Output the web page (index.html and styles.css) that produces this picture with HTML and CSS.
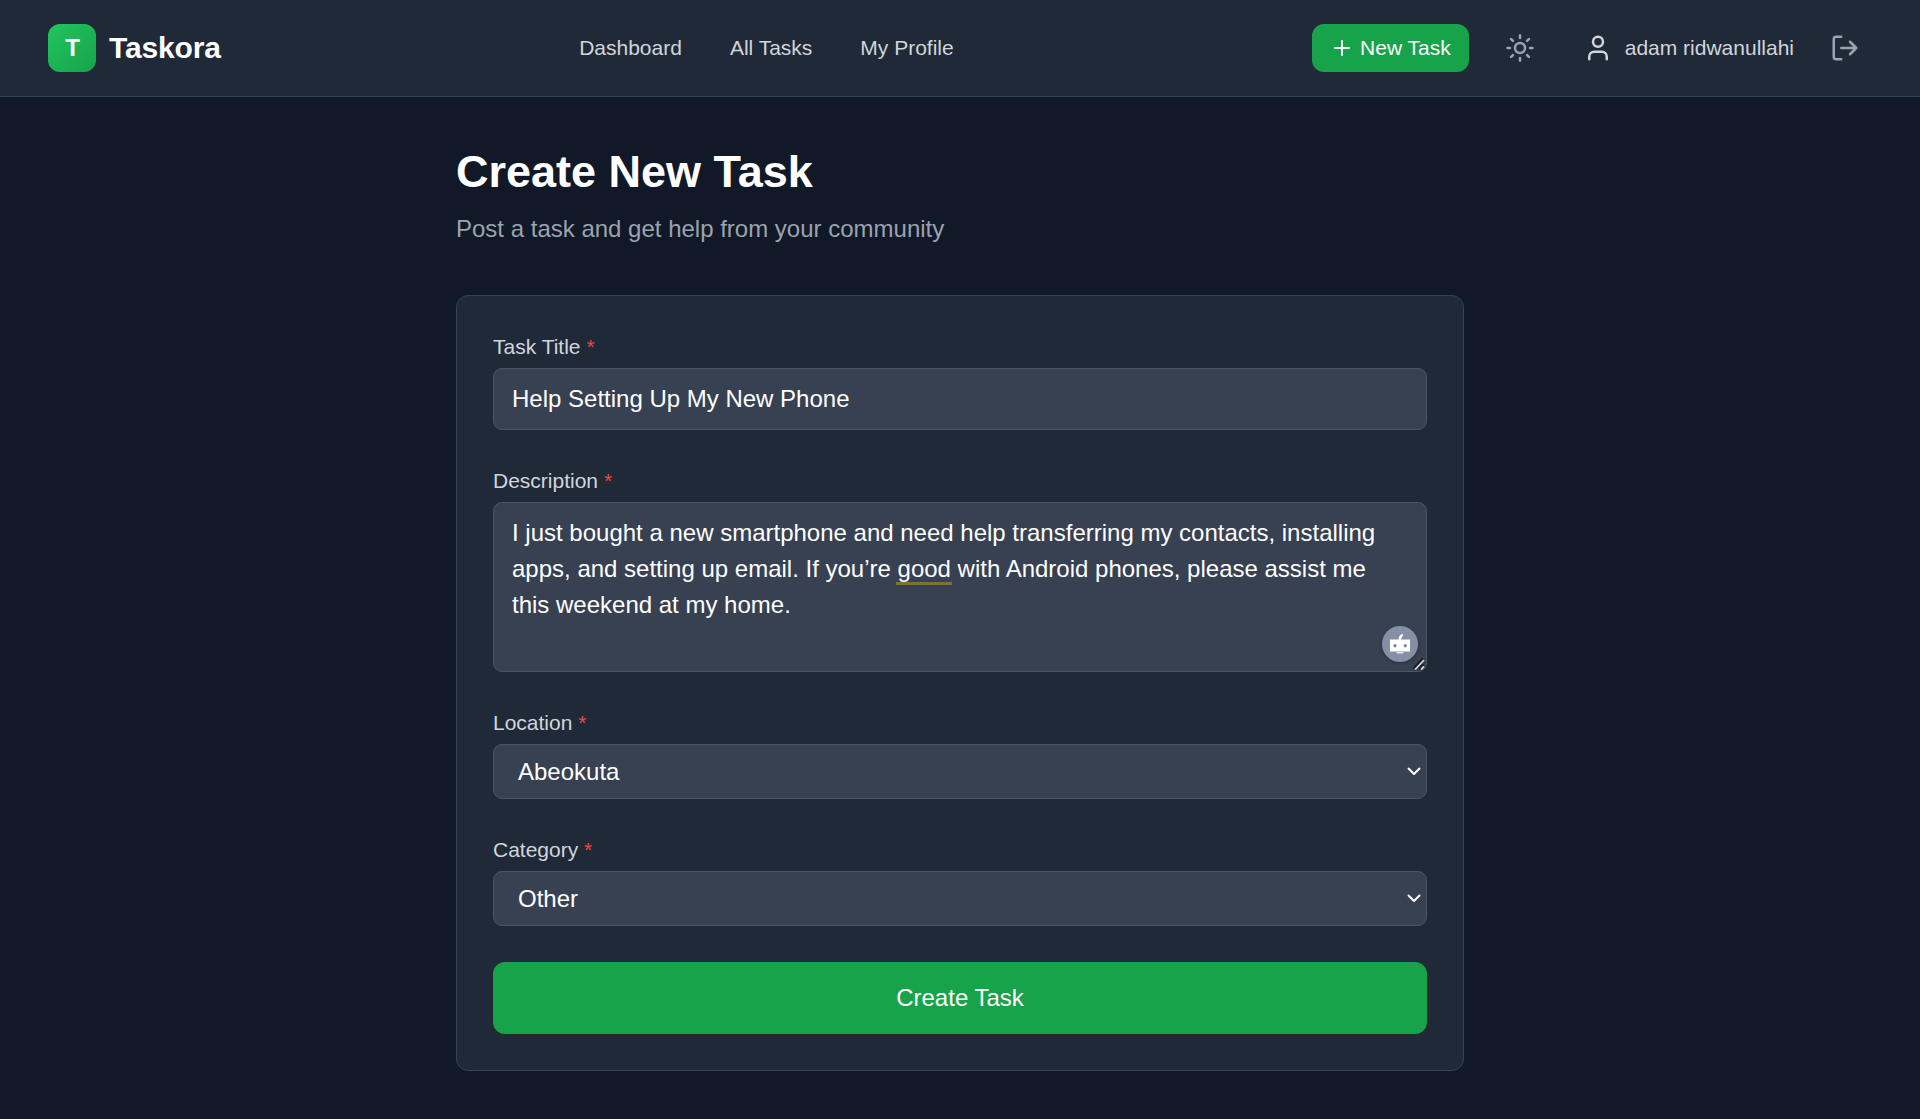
FILE: index.html
```
<!DOCTYPE html>
<html lang="en">
<head>
<meta charset="utf-8">
<title>Taskora</title>
<link rel="stylesheet" href="styles.css">
</head>
<body>
<header class="header">
  <a class="brand"><span class="brand-mark">T</span><span class="brand-name">Taskora</span></a>
  <nav class="nav"><a>Dashboard</a><a>All Tasks</a><a>My Profile</a></nav>
  <div class="actions">
    <button class="new-task">
      <svg width="24" height="24" viewBox="0 0 24 24"><path d="M5 12h14M12 5v14"/></svg>New Task
    </button>
    <button class="icon-button" aria-label="Theme">
      <svg width="30" height="30" viewBox="0 0 24 24"><circle cx="12" cy="12" r="4"/><path d="M12 2v2M12 20v2M4.93 4.93l1.41 1.41M17.66 17.66l1.41 1.41M2 12h2M20 12h2M6.34 17.66l-1.41 1.41M19.07 4.93l-1.41 1.41"/></svg>
    </button>
    <a class="user">
      <svg width="30" height="30" viewBox="0 0 24 24"><path d="M19 21v-2a4 4 0 0 0-4-4H9a4 4 0 0 0-4 4v2"/><circle cx="12" cy="7" r="4"/></svg>adam ridwanullahi
    </a>
    <button class="icon-button" aria-label="Log out">
      <svg width="30" height="30" viewBox="0 0 24 24"><path d="M9 21H5a2 2 0 0 1-2-2V5a2 2 0 0 1 2-2h4M16 17l5-5-5-5M21 12H9"/></svg>
    </button>
  </div>
</header>
<main class="main">
  <h1 class="title">Create New Task</h1>
  <p class="subtitle">Post a task and get help from your community</p>
  <form class="card">
    <div class="field">
      <label class="label">Task Title <span class="required">*</span></label>
      <div class="control">Help Setting Up My New Phone</div>
    </div>
    <div class="field">
      <label class="label">Description <span class="required">*</span></label>
      <div class="control textarea">I just bought a new smartphone and need help transferring my contacts, installing apps, and setting up email. If you’re <span class="hint">good</span> with Android phones, please assist me this weekend at my home.
        <span class="assistant"><svg class="robot" width="36" height="36" viewBox="0 0 36 36"><path d="M8 13.500h8.500l.6-3 3.200-3 .7.500-.4 2.300-2 3.200H28v12H8z" fill="#fff"/><path d="M14.500 26h7v1.500h-7z" fill="#dde1ea"/><circle cx="13" cy="19.700" r="1.700" fill="#7f899d"/><circle cx="23.300" cy="19.700" r="1.700" fill="#7f899d"/></svg></span>
        <svg class="grip" width="12" height="12" viewBox="0 0 12 12"><path d="M.5 10.500l9.500-10M6 11l4.500-4.500" stroke="#16181c" stroke-width="2"/><path d="M2 11.500l9-9.500M8 11.500l3-3" stroke="#d0d2d6" stroke-width="1.800"/></svg>
      </div>
    </div>
    <div class="field">
      <label class="label">Location <span class="required">*</span></label>
      <div class="control select">Abeokuta<svg width="14" height="9" viewBox="0 0 14 9"><path d="M1.500 1.500L7 7l5.500-5.500"/></svg></div>
    </div>
    <div class="field">
      <label class="label">Category <span class="required">*</span></label>
      <div class="control select">Other<svg width="14" height="9" viewBox="0 0 14 9"><path d="M1.500 1.500L7 7l5.500-5.500"/></svg></div>
    </div>
    <button class="submit" type="button">Create Task</button>
  </form>
</main>
</body>
</html>
```
FILE: styles.css
```
* { box-sizing: border-box; }
body {
  margin: 0;
  min-height: 1119px;
  background: #111827;
  color: #fff;
  font: 24px/36px "Liberation Sans", Arial, sans-serif;
}
button { border: 0; font: inherit; color: inherit; background: none; }
svg {
  display: block;
  flex: none;
  fill: none;
  stroke: currentColor;
  stroke-width: 2;
  stroke-linecap: round;
  stroke-linejoin: round;
}
.header {
  display: flex;
  align-items: center;
  justify-content: space-between;
  height: 97px;
  padding: 0 48px;
  background: #1f2937;
  border-bottom: 1px solid #374151;
}
.brand, .nav, .actions, .user, .new-task { display: flex; align-items: center; }
.brand { gap: 12px; }
.brand-mark {
  display: grid;
  place-items: center;
  width: 48px;
  height: 48px;
  padding-left: 1px;
  border-radius: 12px;
  background: linear-gradient(135deg, #22c55e, #16a34a);
  font-weight: 700;
}
.brand-name { padding-left: 1px; font-size: 30px; font-weight: 700; letter-spacing: -.15px; }
.nav { gap: 48px; color: #d1d5db; font-size: 21px; }
.actions { gap: 24px; font-size: 21px; }
.new-task {
  gap: 6px;
  height: 48px;
  padding: 0 18px;
  border-radius: 12px;
  background: #16a34a;
}
.icon-button { padding: 12px; color: #9ca3af; }
.user { gap: 12px; padding-left: 12px; color: #d1d5db; }
.main { width: 1008px; margin: 0 auto; padding: 48px 0; }
.title { margin: 0 0 12px; font-size: 45px; line-height: 54px; }
.subtitle { margin: 0 0 48px; color: #9ca3af; }
.card {
  display: flex;
  flex-direction: column;
  gap: 36px;
  padding: 36px;
  border: 1px solid #374151;
  border-radius: 12px;
  background: #1f2937;
}
.field { display: flex; flex-direction: column; gap: 6px; }
.label { color: #d1d5db; font-size: 21px; line-height: 30px; }
.required { color: #ef4444; }
.control {
  position: relative;
  padding: 12px 18px;
  border: 1px solid #4b5563;
  border-radius: 9px;
  background: #374151;
}
.textarea { height: 170px; }
.hint { margin: 0 -1.5px; padding: 0 1.5px; box-shadow: 0 3px #83702d; }
.assistant {
  position: absolute;
  right: 8px;
  bottom: 9px;
  width: 36px;
  height: 36px;
  border-radius: 50%;
  background: #8590a6;
  box-shadow: 0 1px 3px rgba(0, 0, 0, .3);
}
.robot { stroke: none; }
.grip { position: absolute; right: 1px; bottom: 1px; stroke-linecap: butt; }
.select {
  display: flex;
  align-items: center;
  justify-content: space-between;
  height: 55px;
  padding: 0 5px 0 24px;
}
.submit {
  height: 72px;
  border-radius: 12px;
  background: #16a34a;
}
```
